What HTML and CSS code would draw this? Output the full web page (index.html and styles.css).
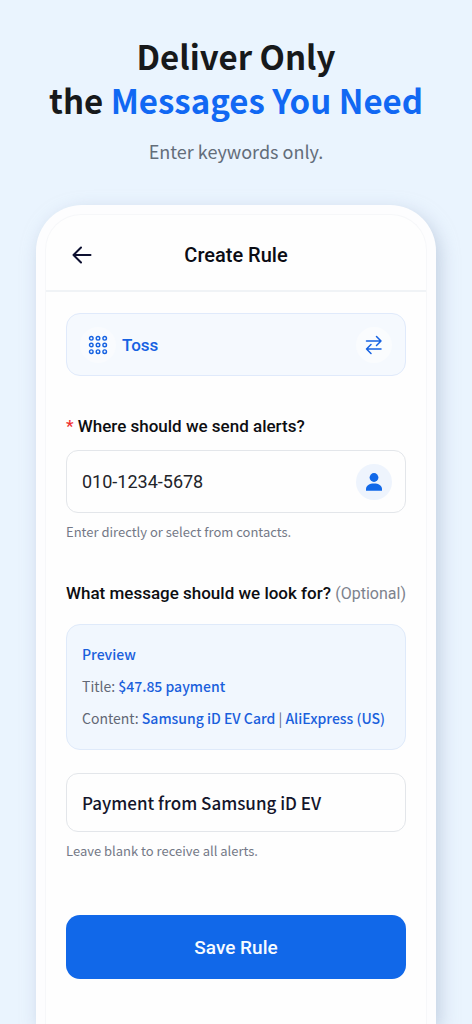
FILE: index.html
```html
<!DOCTYPE html>
<html lang="en">
<head>
<meta charset="utf-8">
<meta name="viewport" content="width=device-width, initial-scale=1">
<title>Create Rule</title>
<link rel="stylesheet" href="styles.css">
</head>
<body>
<div class="page">
  <header class="hero">
    <h1 class="hero-title"><span class="hero-line">Deliver Only</span> <span class="hero-line">the <span class="accent">Messages You Need</span></span></h1>
    <p class="hero-text">Enter keywords only.</p>
  </header>
  <main class="phone">
    <div class="screen">
      <div class="topbar">
        <button class="back" type="button" aria-label="Back">
          <svg width="20" height="18" viewBox="0 0 20 18" fill="none" stroke="currentColor" stroke-width="2" stroke-linecap="round" stroke-linejoin="round"><path d="M18.5 9H1.5M9 1.5L1.5 9L9 16.500"/></svg>
        </button>
        <h2 class="topbar-title">Create Rule</h2>
      </div>
      <form class="form">
        <div class="app-card">
          <span class="app-icon">
            <svg width="20" height="20" viewBox="0 0 20 20" fill="none" stroke="currentColor" stroke-width="1.400"><circle cx="3.300" cy="3.300" r="1.800"/><circle cx="10" cy="3.300" r="1.800"/><circle cx="16.700" cy="3.300" r="1.800"/><circle cx="3.300" cy="10" r="1.800"/><circle cx="10" cy="10" r="1.800"/><circle cx="16.700" cy="10" r="1.800"/><circle cx="3.300" cy="16.700" r="1.800"/><circle cx="10" cy="16.700" r="1.800"/><circle cx="16.700" cy="16.700" r="1.800"/></svg>
          </span>
          <span class="app-name">Toss</span>
          <button class="round swap" type="button" aria-label="Change app">
            <svg width="18" height="20" viewBox="0 0 18 20" fill="none" stroke="currentColor" stroke-width="1.500" stroke-linecap="round" stroke-linejoin="round"><path d="M1.500 6H16M11.500 1.500L16 6L11.500 10.500M16 14H1.500M6 9.500L1.500 14L6 18.500"/></svg>
          </button>
        </div>

        <label class="label" for="phone"><span class="required">*</span> Where should we send alerts?</label>
        <div class="field field-phone">
          <input class="input input-phone" id="phone" type="tel" value="010-1234-5678">
          <button class="round contact" type="button" aria-label="Select from contacts">
            <svg width="18" height="20" viewBox="0 0 18 20" fill="currentColor"><circle cx="9" cy="5.500" r="4.400"/><path d="M1 18.700V17C1 13.500 4.500 11.500 9 11.500S17 13.500 17 17V18.700Z"/></svg>
          </button>
        </div>
        <p class="hint">Enter directly or select from contacts.</p>

        <label class="label" for="keyword">What message should we look for? <span class="optional">(Optional)</span></label>
        <div class="preview">
          <p class="preview-line preview-head">Preview</p>
          <p class="preview-line">Title: <span class="value">$47.85 payment</span></p>
          <p class="preview-line">Content: <span class="value">Samsung iD EV Card</span> | <span class="value">AliExpress (US)</span></p>
        </div>
        <div class="field field-keyword">
          <input class="input input-keyword" id="keyword" type="text" value="Payment from Samsung iD EV">
        </div>
        <p class="hint">Leave blank to receive all alerts.</p>
        <button class="save" type="submit">Save Rule</button>
      </form>
    </div>
  </main>
</div>
</body>
</html>
```
FILE: styles.css
```css
* {
  box-sizing: border-box;
}

body {
  margin: 0;
  background: #eaf4fe;
  color: #0d0e12;
  font-family: Roboto, "Noto Sans", sans-serif;
}

h1, h2, p {
  margin: 0;
}

button, input {
  font: inherit;
  color: inherit;
}

button {
  padding: 0;
  border: 0;
  background: none;
  cursor: pointer;
}

svg {
  display: block;
}

.page {
  display: flex;
  flex-direction: column;
  min-height: 100vh;
  overflow: hidden;
}

.hero {
  padding: 34px 16px 42px;
  text-align: center;
}

.hero-title {
  color: #17191b;
  font-family: "Noto Sans CJK KR", sans-serif;
  font-size: 33px;
  font-weight: 700;
  line-height: 44px;
}

.hero-line {
  display: block;
}

.accent {
  color: #1168f3;
}

.hero-text {
  margin-top: 17px;
  color: #636d7a;
  font-family: "Noto Sans CJK KR", sans-serif;
  font-size: 18px;
  line-height: 24px;
}

.phone {
  display: flex;
  flex: 1;
  margin: 0 36px;
  padding: 9px 9px 0;
  border-radius: 46px 46px 0 0;
  background: #fdfdfe;
  box-shadow: 4px 6px 18px #a8b7cf99;
}

.screen {
  flex: 1;
  min-width: 0;
  border: 1px solid #f6f7f9;
  border-bottom: 0;
  border-radius: 36px 36px 0 0;
  background: #fefefe;
}

.topbar {
  display: grid;
  grid-template-columns: 48px 1fr 48px;
  align-items: center;
  height: 77px;
  padding: 4px 12px 0;
  border-bottom: 2px solid #f0f3f6;
}

.back {
  display: grid;
  place-items: center;
  height: 48px;
  color: #0d1030;
}

.topbar-title {
  color: #0b0c14;
  font-size: 20px;
  font-weight: 500;
  line-height: 24px;
  text-align: center;
}

.form {
  display: flex;
  flex-direction: column;
  padding: 21px 20px 45px;
}

.app-card {
  display: flex;
  align-items: center;
  height: 63px;
  padding: 0 13px;
  border: 1px solid #e0eafb;
  border-radius: 14px;
  background: #f5f9fe;
  color: #1662e2;
}

.app-icon {
  display: grid;
  place-items: center;
  width: 36px;
  height: 36px;
  border-radius: 50%;
  background: #f9fbfe;
}

.app-name {
  flex: 1;
  margin-left: 6px;
  font-size: 17px;
  font-weight: 500;
}

.round {
  display: grid;
  flex: none;
  place-items: center;
  width: 36px;
  height: 36px;
  border-radius: 50%;
}

.swap {
  background: #fafcfe;
}

.contact {
  background: #eef4fd;
  color: #1168e8;
}

.label {
  margin-top: 38px;
  font-size: 17px;
  font-weight: 500;
  line-height: 24px;
  white-space: nowrap;
}

.required {
  color: #f03030;
}

.optional {
  color: #7d828d;
  font-size: 16px;
  font-weight: 400;
}

.field {
  display: flex;
  align-items: center;
  border: 1px solid #e3e6ea;
  border-radius: 12px;
  background: #fefefe;
}

.field-phone {
  height: 63px;
  margin-top: 12px;
  padding-right: 13px;
}

.field-keyword {
  height: 59px;
  margin-top: 23px;
}

.input {
  flex: 1;
  min-width: 0;
  height: 100%;
  padding: 0 15px;
  border: 0;
  border-radius: 12px;
  background: none;
}

.input-phone {
  color: #22242a;
  font-size: 18px;
}

.input-keyword {
  color: #14152b;
  font-family: "Noto Sans CJK KR", sans-serif;
  font-size: 17px;
  font-weight: 500;
}

.hint {
  margin-top: 8px;
  color: #747987;
  font-family: "Noto Sans CJK KR", sans-serif;
  font-size: 13px;
  line-height: 22px;
}

.preview {
  margin-top: 18px;
  padding: 13px 15px 15px;
  border: 1px solid #dfeafa;
  border-radius: 14px;
  background: #f1f7fe;
}

.preview-line {
  color: #626875;
  font-family: "Noto Sans CJK KR", sans-serif;
  font-size: 14px;
  line-height: 32px;
  white-space: nowrap;
}

.preview-head,
.value {
  color: #1a60dc;
  font-weight: 500;
}

.save {
  height: 64px;
  margin-top: 53px;
  border-radius: 14px;
  background: #1168e9;
  color: #f7fbff;
  font-size: 19px;
  font-weight: 500;
}
```
